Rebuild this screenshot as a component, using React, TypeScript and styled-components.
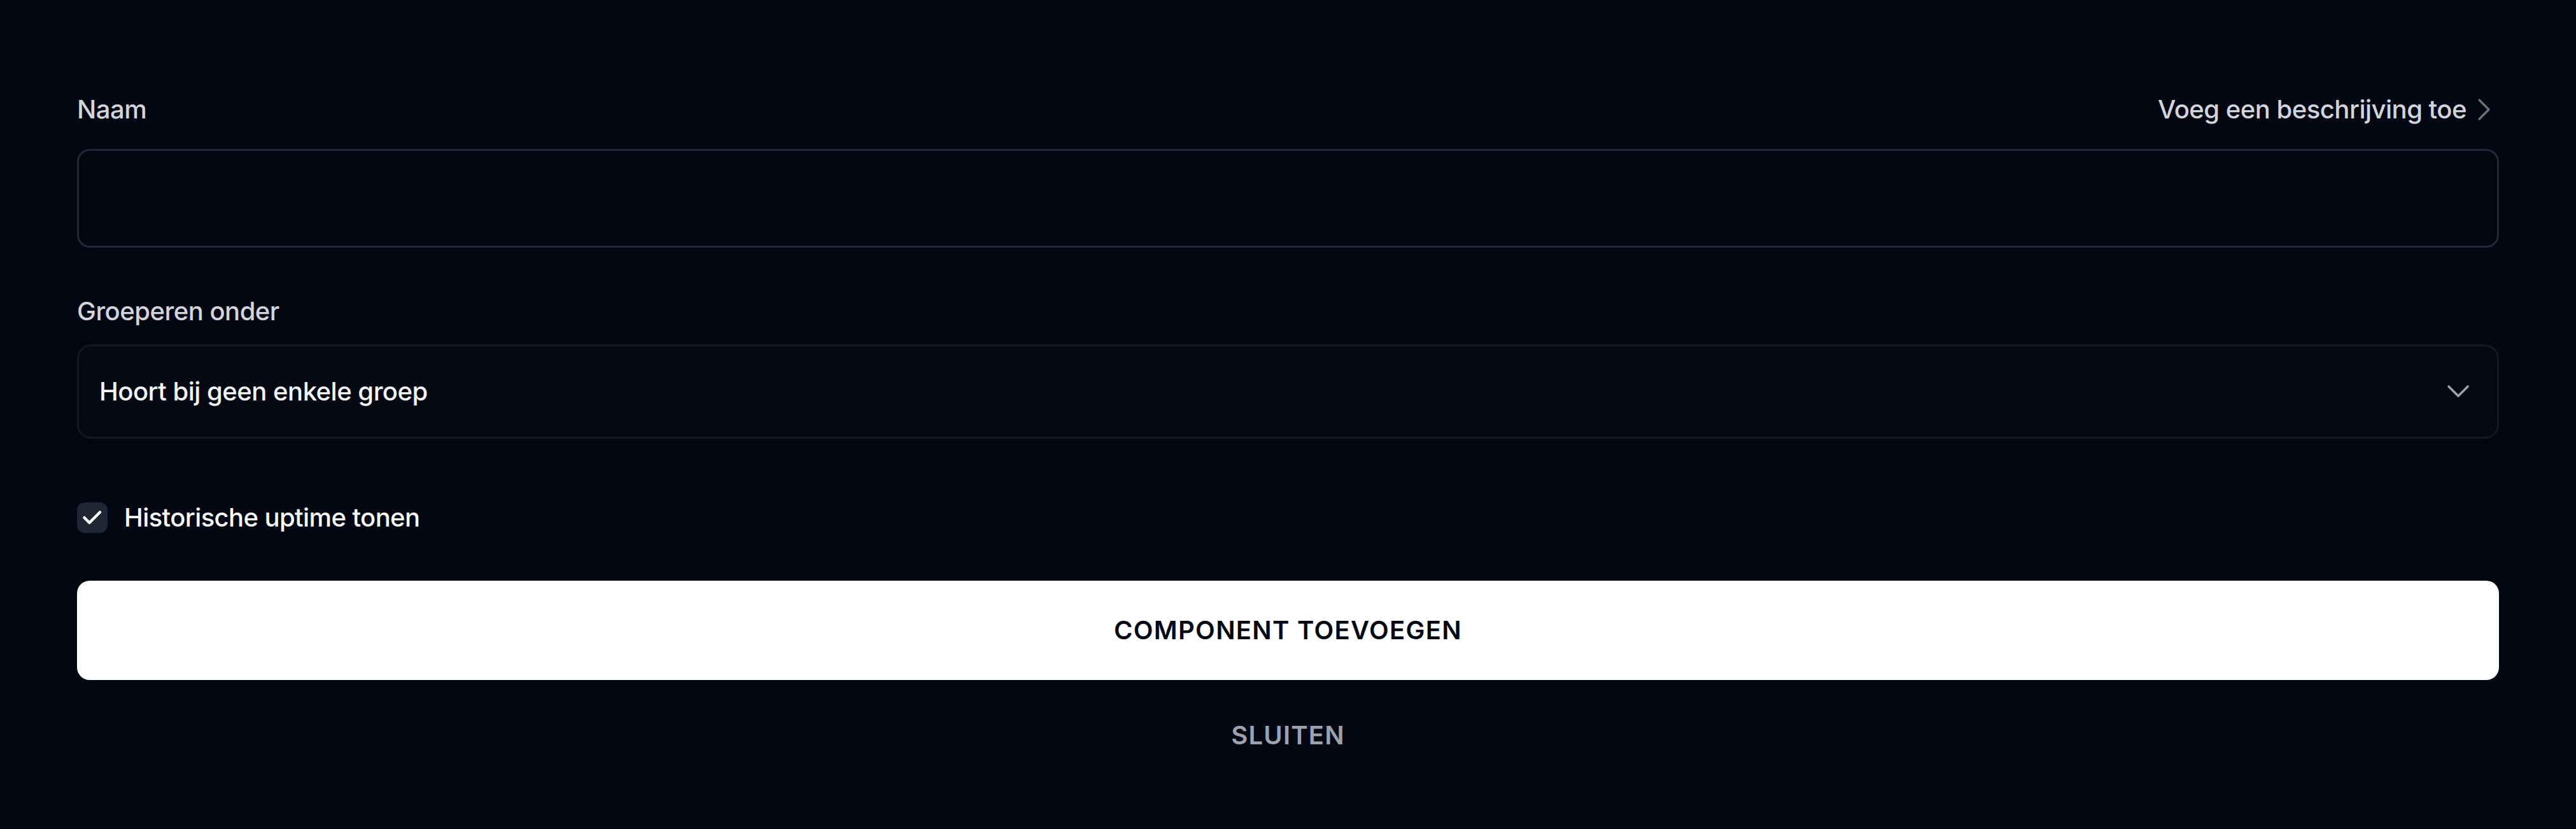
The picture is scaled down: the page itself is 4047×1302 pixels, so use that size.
import React from "react";
import styled, { createGlobalStyle } from "styled-components";

const GlobalStyle = createGlobalStyle`
  html, body {
    margin: 0;
    padding: 0;
    background: #030712;
  }
  body {
    font-family: Inter, "Noto Sans", "Liberation Sans", sans-serif;
    -webkit-font-smoothing: antialiased;
  }
  * { box-sizing: border-box; }
`;

const Page = styled.div`
  width: 4047px;
  min-height: 1302px;
  background: #030712;
`;

const Form = styled.form`
  display: flex;
  flex-direction: column;
  padding: 142px 121px 0 121px;
`;

const FieldHeader = styled.div`
  display: flex;
  align-items: center;
  justify-content: space-between;
`;

const Label = styled.label<{ $gap?: number }>`
  display: block;
  margin-top: ${(p) => p.$gap ?? 0}px;
  font-size: 40px;
  line-height: 60px;
  font-weight: 500;
  letter-spacing: -0.5px;
  color: #d1d5db;
`;

const DescLink = styled.button`
  display: flex;
  align-items: center;
  gap: 17px;
  padding: 0 13px 0 0;
  background: none;
  border: none;
  font-family: inherit;
  font-size: 40px;
  line-height: 60px;
  font-weight: 500;
  letter-spacing: -0.5px;
  color: #d1d5db;
  cursor: pointer;
`;

const TextInput = styled.input`
  margin-top: 32px;
  height: 155px;
  width: 100%;
  border: 3px solid #222937;
  border-radius: 20px;
  background: transparent;
  color: #f9fafb;
  font-family: inherit;
  font-size: 40px;
  padding: 0 33px;
  outline: none;
`;

const SelectBox = styled.div`
  margin-top: 22px;
  height: 148px;
  display: flex;
  align-items: center;
  justify-content: space-between;
  padding: 0 43px 0 32px;
  border: 3px solid #131925;
  border-radius: 22px;
  background: #050913;
`;

const SelectValue = styled.span`
  font-size: 40px;
  line-height: 60px;
  font-weight: 500;
  letter-spacing: -0.5px;
  color: #f3f4f6;
`;

const CheckRow = styled.label`
  margin-top: 94px;
  display: flex;
  align-items: center;
  gap: 26px;
  cursor: pointer;
`;

const CheckBox = styled.span`
  width: 48px;
  height: 48px;
  border-radius: 12px;
  background: #1f2735;
  display: flex;
  align-items: center;
  justify-content: center;
`;

const CheckText = styled.span`
  font-size: 40px;
  line-height: 60px;
  font-weight: 500;
  letter-spacing: -0.6px;
  color: #f9fafb;
`;

const PrimaryButton = styled.button`
  margin-top: 69px;
  height: 156px;
  width: 100%;
  border: none;
  border-radius: 20px;
  background: #ffffff;
  color: #030712;
  font-family: inherit;
  font-size: 40px;
  line-height: 60px;
  font-weight: 600;
  letter-spacing: 1.3px;
  cursor: pointer;
`;

const SecondaryButton = styled.button`
  margin-top: 57px;
  align-self: center;
  padding: 0;
  border: none;
  background: none;
  color: #9ca3af;
  font-family: inherit;
  font-size: 40px;
  line-height: 60px;
  font-weight: 600;
  letter-spacing: 1.2px;
  cursor: pointer;
`;

const ChevronRight = () => (
  <svg width="21" height="34" viewBox="0 0 21 34" fill="none">
    <path d="M3 2 L18 17 L3 32" stroke="#6b7280" strokeWidth="3.2" strokeLinecap="round" strokeLinejoin="round" />
  </svg>
);

const ChevronDown = () => (
  <svg width="36" height="22" viewBox="0 0 36 22" fill="none">
    <path d="M3 3 L18 18 L33 3" stroke="#9ca3af" strokeWidth="3.6" strokeLinecap="round" strokeLinejoin="round" />
  </svg>
);

const CheckIcon = () => (
  <svg width="48" height="48" viewBox="0 0 48 48" fill="none">
    <path d="M11.5 24 L19.5 32 L36 15.5" stroke="#ffffff" strokeWidth="4.5" strokeLinecap="round" strokeLinejoin="round" />
  </svg>
);

export default function App() {
  return (
    <Page>
      <GlobalStyle />
      <Form onSubmit={(e) => e.preventDefault()}>
        <FieldHeader>
          <Label htmlFor="naam">Naam</Label>
          <DescLink type="button">
            Voeg een beschrijving toe
            <ChevronRight />
          </DescLink>
        </FieldHeader>
        <TextInput id="naam" type="text" />

        <Label $gap={70}>Groeperen onder</Label>
        <SelectBox>
          <SelectValue>Hoort bij geen enkele groep</SelectValue>
          <ChevronDown />
        </SelectBox>

        <CheckRow>
          <CheckBox>
            <CheckIcon />
          </CheckBox>
          <CheckText>Historische uptime tonen</CheckText>
        </CheckRow>

        <PrimaryButton type="submit">COMPONENT TOEVOEGEN</PrimaryButton>
        <SecondaryButton type="button">SLUITEN</SecondaryButton>
      </Form>
    </Page>
  );
}
